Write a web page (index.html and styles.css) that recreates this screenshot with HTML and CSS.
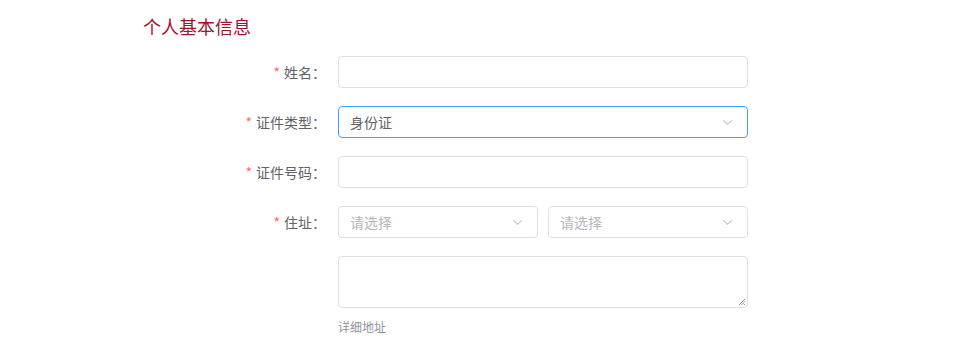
FILE: index.html
```html
<!DOCTYPE html>
<html lang="zh">
<head>
<meta charset="utf-8">
<link rel="stylesheet" href="styles.css">
</head>
<body>
<div class="page">
  <h2 class="title">个人基本信息</h2>
  <form class="form">
    <div class="row">
      <label class="label"><span class="req">*</span>姓名：</label>
      <div class="field"><div class="input"></div></div>
    </div>
    <div class="row">
      <label class="label"><span class="req">*</span>证件类型：</label>
      <div class="field"><div class="input select focus"><span class="val">身份证</span><svg class="arrow" viewBox="0 0 12 8"><path d="M1 1.5 L6 6 L11 1.5" fill="none" stroke="#c0c4cc" stroke-width="1.2"/></svg></div></div>
    </div>
    <div class="row">
      <label class="label"><span class="req">*</span>证件号码：</label>
      <div class="field"><div class="input"></div></div>
    </div>
    <div class="row">
      <label class="label"><span class="req">*</span>住址：</label>
      <div class="field split">
        <div class="input select"><span class="ph">请选择</span><svg class="arrow" viewBox="0 0 12 8"><path d="M1 1.5 L6 6 L11 1.5" fill="none" stroke="#c0c4cc" stroke-width="1.2"/></svg></div>
        <div class="input select"><span class="ph">请选择</span><svg class="arrow" viewBox="0 0 12 8"><path d="M1 1.5 L6 6 L11 1.5" fill="none" stroke="#c0c4cc" stroke-width="1.2"/></svg></div>
      </div>
    </div>
    <div class="row tall">
      <div class="label"></div>
      <div class="field col">
        <div class="textarea"><svg class="grip" viewBox="0 0 8 8"><path d="M7 1 L1 7 M7 3.5 L3.5 7 M7 6 L6 7" stroke="#888" stroke-width="0.9"/></svg></div>
        <div class="hint">详细地址</div>
      </div>
    </div>
  </form>
</div>
</body>
</html>
```

FILE: styles.css
```css
* { box-sizing: border-box; }
html, body { margin: 0; padding: 0; background: #fff; }
body {
  font-family: "Noto Sans CJK SC", "Noto Sans", sans-serif;
  color: #606266;
}
.page { padding: 14px 0 0 143px; }
.title {
  margin: 0 0 18px 0;
  font-size: 18px;
  font-weight: 400;
  line-height: 24px;
  color: #a2122c;
}
.form { display: flex; flex-direction: column; gap: 18px; }
.row { display: flex; align-items: flex-start; }
.label {
  width: 195px;
  padding-right: 12px;
  text-align: right;
  font-size: 14px;
  line-height: 32px;
  color: #606266;
}
.req { color: #f56c6c; margin-right: 4px; }
.field { width: 410px; }
.split { display: flex; gap: 10px; }
.col { display: flex; flex-direction: column; }
.input {
  height: 32px;
  border: 1px solid #dcdfe6;
  border-radius: 4px;
  background: #fff;
  display: flex;
  align-items: center;
  padding: 0 11px;
  font-size: 14px;
  flex: 1;
}
.select { justify-content: space-between; }
.focus { border-color: #409eff; }
.val { color: #606266; }
.ph { color: #b4b7bf; }
.arrow { width: 11px; height: 7px; margin-right: 3px; }
.textarea {
  height: 52px;
  border: 1px solid #dcdfe6;
  border-radius: 4px;
  position: relative;
}
.grip { position: absolute; right: 1px; bottom: 1px; width: 8px; height: 8px; }
.hint {
  margin-top: 10px;
  font-size: 12px;
  line-height: 18px;
  color: #909399;
}
```
